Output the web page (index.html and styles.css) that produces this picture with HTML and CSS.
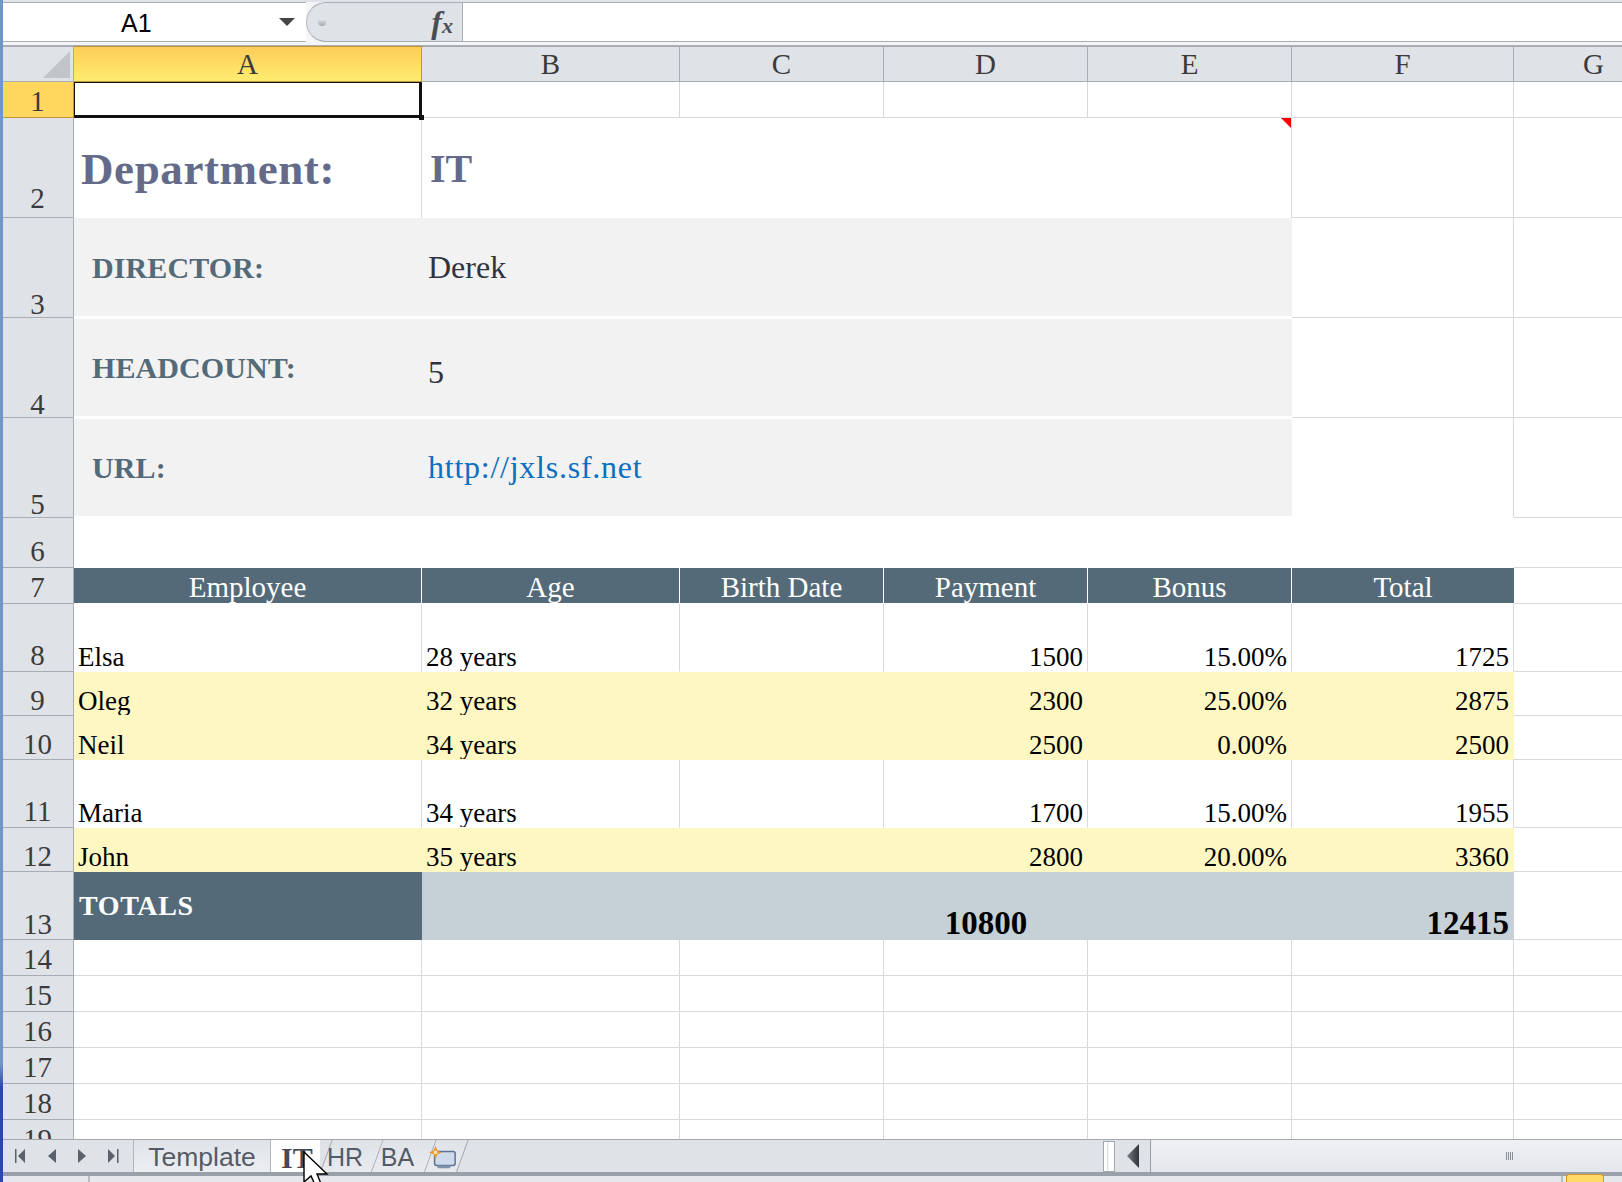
FILE: index.html
```html
<!DOCTYPE html>
<html>

<head>
	<meta charset="utf-8">
	<title>Book1 - IT</title>
	<link rel="stylesheet" href="styles.css">
</head>

<body>
	<div class="window">
		<div class="window-edge"></div>
		<div class="excel">
			<div class="formula-bar">
				<div class="name-box">
					<span class="name-value">A1</span>
					<span class="name-arrow"></span>
				</div>
				<div class="fx-box">
					<span class="fx-dot"></span>
					<span class="fx-label"><i>f</i><i class="fx-x">x</i></span>
				</div>
				<div class="formula-input"></div>
			</div>

			<div class="sheet">
				<table class="grid">
					<colgroup>
						<col class="col-head">
						<col class="col-a">
						<col class="col-b">
						<col class="col-c">
						<col class="col-d">
						<col class="col-e">
						<col class="col-f">
						<col class="col-g">
					</colgroup>
					<tr class="h36 letters">
						<th class="corner">
							<svg class="corner-mark" width="27" height="27" viewBox="0 0 27 27"><polygon points="27,0 27,27 0,27" fill="#c0c5ca"/></svg>
						</th>
						<th class="letter-active">A</th>
						<th>B</th>
						<th>C</th>
						<th>D</th>
						<th>E</th>
						<th>F</th>
						<th>G</th>
					</tr>
					<tr class="h36">
						<th class="row-active">1</th>
						<td class="selected"></td><td></td><td></td><td></td><td></td><td></td><td></td>
					</tr>
					<tr class="h100">
						<th class="row-2">2</th>
						<td class="dept-label">Department:</td>
						<td class="dept-value" colspan="4">IT</td>
						<td></td><td></td>
					</tr>
					<tr class="h100 info first">
						<th>3</th>
						<td class="info-label">DIRECTOR:</td>
						<td class="info-value" colspan="4">Derek</td>
						<td class="plain"></td><td class="plain"></td>
					</tr>
					<tr class="h100 info">
						<th>4</th>
						<td class="info-label">HEADCOUNT:</td>
						<td class="info-value info-num" colspan="4">5</td>
						<td class="plain"></td><td class="plain"></td>
					</tr>
					<tr class="h100 info">
						<th>5</th>
						<td class="info-label">URL:</td>
						<td class="info-value info-link" colspan="4">http://jxls.sf.net</td>
						<td class="plain no-bottom"></td><td class="plain"></td>
					</tr>
					<tr class="h50">
						<th>6</th>
						<td class="blank" colspan="6"></td><td class="end-cell"></td>
					</tr>
					<tr class="h36 titles">
						<th>7</th>
						<td>Employee</td><td>Age</td><td>Birth Date</td><td>Payment</td><td>Bonus</td><td class="last">Total</td>
						<td class="end-cell"></td>
					</tr>
					<tr class="h68 data">
						<th>8</th>
						<td>Elsa</td><td>28 years</td><td></td><td class="num">1500</td><td class="num">15.00%</td><td class="num">1725</td><td class="end-cell"></td>
					</tr>
					<tr class="h44 data band">
						<th>9</th>
						<td>Oleg</td><td>32 years</td><td></td><td class="num">2300</td><td class="num">25.00%</td><td class="num">2875</td><td class="end-cell"></td>
					</tr>
					<tr class="h44 data band">
						<th>10</th>
						<td>Neil</td><td>34 years</td><td></td><td class="num">2500</td><td class="num">0.00%</td><td class="num">2500</td><td class="end-cell"></td>
					</tr>
					<tr class="h68 data">
						<th>11</th>
						<td>Maria</td><td>34 years</td><td></td><td class="num">1700</td><td class="num">15.00%</td><td class="num">1955</td><td class="end-cell"></td>
					</tr>
					<tr class="h44 data band">
						<th>12</th>
						<td>John</td><td>35 years</td><td></td><td class="num">2800</td><td class="num">20.00%</td><td class="num">3360</td><td class="end-cell"></td>
					</tr>
					<tr class="h68 totals">
						<th>13</th>
						<td class="totals-label">TOTALS</td>
						<td></td><td></td><td class="totals-mid">10800</td><td></td><td class="totals-end">12415</td>
						<td class="end-cell"></td>
					</tr>
					<tr class="h36"><th>14</th><td></td><td></td><td></td><td></td><td></td><td></td><td></td></tr>
					<tr class="h36"><th>15</th><td></td><td></td><td></td><td></td><td></td><td></td><td></td></tr>
					<tr class="h36"><th>16</th><td></td><td></td><td></td><td></td><td></td><td></td><td></td></tr>
					<tr class="h36"><th>17</th><td></td><td></td><td></td><td></td><td></td><td></td><td></td></tr>
					<tr class="h36"><th>18</th><td></td><td></td><td></td><td></td><td></td><td></td><td></td></tr>
					<tr class="h36"><th>19</th><td></td><td></td><td></td><td></td><td></td><td></td><td></td></tr>
				</table>
			</div>

			<div class="tab-bar">
				<div class="tab-nav">
					<svg width="11" height="14" viewBox="0 0 11 14"><rect x="0" y="0" width="1.5" height="14" fill="#5a616d"/><polygon points="10,0 10,14 3,7" fill="#5a616d"/></svg>
					<svg width="8" height="14" viewBox="0 0 8 14"><polygon points="8,0 8,14 0,7" fill="#5a616d"/></svg>
					<svg width="8" height="14" viewBox="0 0 8 14"><polygon points="0,0 0,14 8,7" fill="#5a616d"/></svg>
					<svg width="11" height="14" viewBox="0 0 11 14"><polygon points="0,0 0,14 7,7" fill="#5a616d"/><rect x="9" y="0" width="1.5" height="14" fill="#5a616d"/></svg>
				</div>
				<div class="tab tab-first">Template</div>
				<div class="tab tab-active">IT</div>
				<div class="tab tab-skew tab-hr"><span>HR</span></div>
				<div class="tab tab-skew tab-ba"><span>BA</span></div>
				<div class="tab tab-skew tab-new">
					<svg width="30" height="26" viewBox="0 0 30 26">
						<rect x="6" y="6" width="22" height="15" rx="2" fill="#cfdbea" stroke="#5b7396" stroke-width="1.6"/>
						<rect x="9" y="21" width="14" height="3" rx="1" fill="#7f93ae"/>
						<polygon points="7,0 9,5 14,7 9,9 7,14 5,9 0,7 5,5" fill="#e8952a"/>
						<circle cx="7" cy="7" r="2" fill="#fbe3a8"/>
					</svg>
				</div>
				<div class="tab-spacer"></div>
				<div class="split-handle"></div>
				<div class="scroll-left">
					<svg width="12" height="24" viewBox="0 0 12 24">
						<defs><linearGradient id="arrow-fill"><stop offset="0" stop-color="#7a7e84"/><stop offset="1" stop-color="#2f3237"/></linearGradient></defs>
						<polygon points="12,0 12,24 0,12" fill="url(#arrow-fill)"/>
					</svg>
				</div>
				<div class="scroll-track"><span class="scroll-grip"></span></div>
			</div>
			<div class="status-band"></div>
			<div class="status-bar">
				<span class="status-notch"></span>
				<span class="status-notch status-notch-right"></span>
				<span class="status-flag"></span>
			</div>
		</div>
		<svg class="mouse-cursor" width="28" height="40" viewBox="0 0 28 40">
			<polygon points="1,1 1,31 8,25 14,38 19,35 14,23 24,23" fill="#fff" stroke="#000" stroke-width="1.4"/>
		</svg>
	</div>
</body>

</html>
```

FILE: styles.css
```css
html,
body {
  margin: 0;
  height: 100%;
  overflow: hidden;
  background-color: #fff;
}

.window {
  position: relative;
  display: flex;
  height: 100vh;
  overflow: hidden;
  font-family: "Liberation Serif", serif;
}

.window-edge {
  flex: 0 0 3px;
  background: linear-gradient(#7095cc 0, #7095cc 90%, #2c48ae 92%, #2c48ae 100%);
}

.excel {
  flex: 1;
  min-width: 0;
  display: flex;
  flex-direction: column;
}

/* formula bar */
.formula-bar {
  flex: 0 0 46px;
  box-sizing: border-box;
  display: flex;
  padding-bottom: 3px;
  border-top: 2px solid #dfe2e7;
  border-bottom: 1px solid #a8acb3;
  background-color: #f4f5f7;
}

.name-box {
  display: flex;
  align-items: center;
  width: 303px;
  border-top: 1px solid #a8acb3;
  border-bottom: 1px solid #a8acb3;
  background-color: #fff;
  font-family: "Liberation Sans", sans-serif;
}

.name-value {
  margin-left: 118px;
  margin-top: 2px;
  font-size: 25px;
  color: #000;
}

.name-arrow {
  margin-left: 127px;
  margin-top: -1px;
  border-top: 8px solid #444;
  border-left: 8px solid transparent;
  border-right: 8px solid transparent;
}

.fx-box {
  display: flex;
  align-items: center;
  justify-content: space-between;
  box-sizing: border-box;
  width: 157px;
  padding-left: 11px;
  padding-right: 9px;
  border: 1px solid #a8acb3;
  border-left-color: #b8bcc2;
  border-radius: 20px 0 0 20px;
  background-color: #dfe2e7;
}

.fx-dot {
  width: 8px;
  height: 8px;
  border-radius: 50%;
  background: linear-gradient(#eceef0, #a5a9ae);
}

.fx-label {
  font-family: "Liberation Serif", serif;
  font-size: 32px;
  font-weight: bold;
  color: #4a4d52;
  line-height: 1;
}

.fx-x {
  font-size: 22px;
}

.formula-input {
  flex: 1;
  border-top: 1px solid #a8acb3;
  border-bottom: 1px solid #a8acb3;
  background-color: #fff;
}

/* grid */
.sheet {
  flex: 1;
  min-height: 0;
  overflow: hidden;
  background-color: #fff;
}

.grid {
  table-layout: fixed;
  width: 1671px;
  border-collapse: separate;
  border-spacing: 0;
  color: #000;
}

.col-head { width: 71px; }
.col-a { width: 348px; }
.col-b { width: 258px; }
.col-c, .col-d, .col-e { width: 204px; }
.col-f { width: 222px; }
.col-g { width: 160px; }

.h36 { height: 36px; }
.h44 { height: 44px; }
.h50 { height: 50px; }
.h68 { height: 68px; }
.h100 { height: 100px; }

.grid th,
.grid td {
  box-sizing: border-box;
  padding: 0;
  white-space: nowrap;
  line-height: 1;
}

.grid td {
  overflow: hidden;
  border-right: 1px solid #d9d9d9;
  border-bottom: 1px solid #d9d9d9;
  background-clip: padding-box;
}

.grid th {
  border-right: 1px solid #a8acb3;
  border-bottom: 1px solid #a8acb3;
  background-color: #dfe2e7;
  color: #3b3b3b;
  font-weight: normal;
  font-size: 29px;
  text-align: center;
  vertical-align: bottom;
  padding-bottom: 1px;
  padding-right: 1px;
}

.letters th {
  border-top: 1px solid #a8acb3;
  font-size: 29px;
  padding-bottom: 2px;
  padding-right: 0;
}

.corner {
  position: relative;
}

.corner-mark {
  position: absolute;
  right: 3px;
  bottom: 3px;
}

.letters .letter-active {
  background: linear-gradient(#fdcd58, #ffec70);
  border-color: #c2953b;
}

.grid .row-active {
  background-color: #ffd75e;
  border-color: #c2953b;
  padding-bottom: 1px;
}

.grid .row-2 {
  padding-bottom: 4px;
}

.grid .info th {
  padding-bottom: 0;
  line-height: 0.85;
}

.grid .band th,
.grid .totals th {
  padding-bottom: 0;
}

.selected {
  position: relative;
}

.selected::before {
  content: "";
  position: absolute;
  top: 0;
  left: 0;
  right: -1px;
  bottom: -1px;
  box-sizing: border-box;
  border: solid #111;
  border-width: 1px 3px 3px 1px;
}

.selected::after {
  content: "";
  position: absolute;
  right: -3px;
  bottom: -3px;
  width: 5px;
  height: 5px;
  background-color: #111;
}

.grid .selected {
  overflow: visible;
}

/* department block */
.grid .dept-label,
.grid .dept-value {
  border-bottom-color: #fff;
  color: #646b8a;
  font-weight: bold;
  vertical-align: middle;
}

.grid .dept-label {
  padding-left: 7px;
  padding-top: 4px;
  font-size: 45px;
  letter-spacing: 0.6px;
}

.grid .dept-value {
  position: relative;
  padding-left: 8px;
  padding-top: 2px;
  font-size: 40px;
}

.dept-value::after {
  content: "";
  position: absolute;
  top: 0;
  right: 0;
  width: 10px;
  height: 10px;
  background-color: #f00;
  clip-path: polygon(0 0, 100% 0, 100% 100%);
}

.grid .info td {
  background-color: #f2f2f2;
  border-top: 1px solid #fff;
  border-bottom: 2px solid #fff;
  border-right: 0;
  font-size: 32px;
  vertical-align: middle;
}

.grid .info.first td {
  border-top: 0;
}

.grid .info .plain {
  background-color: #fff;
  border-top: 0;
  border-right: 1px solid #d9d9d9;
  border-bottom: 1px solid #d9d9d9;
}

.grid .info .no-bottom {
  border-bottom-color: #fff;
}

.grid .info .info-label {
  padding-left: 18px;
  padding-top: 1px;
  color: #546a79;
  font-size: 30px;
  font-weight: bold;
  letter-spacing: 0.1px;
}

.grid .info .info-value {
  padding-left: 6px;
  padding-bottom: 1px;
  color: #2f3442;
}

.grid .info .info-num {
  padding-top: 9px;
  padding-bottom: 0;
}

.grid .info .info-link {
  color: #0b6fc2;
  letter-spacing: 0.75px;
}

.grid .blank {
  border-right: 0;
  border-bottom: 0;
}

.grid .titles td {
  background-color: #546a79;
  border-right: 1px solid #fff;
  border-bottom: 1px solid #fff;
  color: #fff;
  font-size: 29px;
  text-align: center;
  vertical-align: bottom;
  padding-bottom: 1px;
}

.grid .titles .last {
  border-right: 0;
}

.data td {
  font-size: 27px;
  padding-left: 4px;
  vertical-align: bottom;
  border-bottom-color: #fff;
}

.grid .data .num {
  text-align: right;
  padding-left: 0;
  padding-right: 4px;
}

.grid .band td {
  background-color: #fff7c1;
  border-right-color: #fff7c1;
  border-bottom-color: #fff7c1;
}

.grid .totals td {
  background-color: #c5d0d7;
  border-right: 0;
  border-bottom: 0;
  font-size: 33px;
  font-weight: bold;
  vertical-align: bottom;
}

.grid .totals .totals-label {
  background-color: #546a79;
  color: #fff;
  font-size: 28px;
  letter-spacing: 0.6px;
  padding-left: 5px;
  vertical-align: top;
  padding-top: 20px;
}

.totals-mid {
  text-align: center;
}

.grid .totals-end {
  text-align: right;
  padding-right: 5px;
}

.grid .end-cell,
.grid .band .end-cell,
.grid .titles .end-cell,
.grid .totals .end-cell {
  background-color: #fff;
  border-right: 1px solid #d9d9d9;
  border-bottom: 1px solid #d9d9d9;
}

/* sheet tabs */
.tab-bar {
  flex: 0 0 33px;
  min-height: 0;
  box-sizing: border-box;
  display: flex;
  align-items: stretch;
  border-top: 1px solid #a3a7ae;
  background-color: #dfe3e8;
  color: #555b66;
  font-family: "Liberation Sans", sans-serif;
  font-size: 26.5px;
  line-height: 1;
}

.tab-nav {
  display: flex;
  align-items: center;
  justify-content: space-between;
  box-sizing: border-box;
  width: 130px;
  padding: 0 14px 0 12px;
}

.tab {
  position: relative;
  display: flex;
  align-items: center;
  justify-content: center;
  box-sizing: border-box;
  padding-top: 3px;
}

.tab-first {
  width: 138px;
  border: 1px solid #b3b7bd;
  border-top: 0;
  border-bottom: 0;
  background: linear-gradient(#dfe3e8, #eceef1);
}

.tab-active {
  width: 49px;
  background-color: #fff;
  color: #454a55;
  font-family: "Liberation Serif", serif;
  font-weight: bold;
  font-size: 30px;
  justify-content: flex-start;
  padding-left: 10px;
}

.tab-skew {
  background: none;
}

.tab-skew::before {
  content: "";
  position: absolute;
  top: 0;
  bottom: 0;
  left: 0;
  right: 0;
  transform: skewX(-20deg);
  transform-origin: bottom left;
  box-sizing: border-box;
  border-right: 1px solid #a3a7ae;
  background: linear-gradient(#dfe3e8, #e8eaee);
}

.tab-skew span,
.tab-skew svg {
  position: relative;
}

.tab-hr { width: 52px; font-size: 25px; padding-right: 2px; }
.tab-ba { width: 53px; font-size: 25px; padding-right: 2px; }
.tab-new { width: 32px; padding-left: 4px; }

.tab-active + .tab-hr::before {
  border-left: 1px solid #a3a7ae;
}

.tab-spacer {
  flex: 0 0 646px;
}

.split-handle {
  width: 12px;
  box-sizing: border-box;
  margin-top: 1px;
  border: 1px solid #a3a7ae;
  background: linear-gradient(90deg, #fff 0, #fff 30%, #cfd3e6 30%, #fff 50%);
}

.scroll-left {
  display: flex;
  align-items: center;
  justify-content: center;
  width: 35px;
  background-color: #dfe3e8;
}

.scroll-track {
  flex: 1;
  display: flex;
  align-items: center;
  padding-left: 355px;
  border-left: 1px solid #9a9ea5;
  border-top: 1px solid #a3a7ae;
  margin-top: -1px;
  background: linear-gradient(#eef0f4, #e3e6eb);
}

.scroll-grip {
  width: 7px;
  height: 8px;
  background: repeating-linear-gradient(90deg, #8a8f96 0, #8a8f96 1px, transparent 1px, transparent 2px);
}

.status-band {
  flex: 0 0 4px;
  background-color: #9aa0a9;
}

.status-bar {
  position: relative;
  flex: 0 0 6px;
  background-color: #e5e7eb;
}

.status-notch {
  position: absolute;
  left: 85px;
  top: 0;
  bottom: 0;
  width: 2px;
  background-color: #b8bcc2;
}

.status-notch-right {
  left: 1558px;
}

.status-flag {
  position: absolute;
  left: 1563px;
  top: -2px;
  bottom: 0;
  width: 38px;
  box-sizing: border-box;
  border: 1px solid #d6952d;
  border-bottom: 0;
  border-radius: 3px 3px 0 0;
  background-color: #ffd966;
}

/* pointer captured over the IT tab */
.mouse-cursor {
  position: absolute;
  left: 303px;
  top: 1151px;
}
```
